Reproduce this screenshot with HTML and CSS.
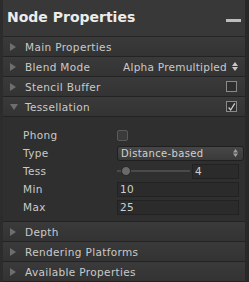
FILE: index.html
```html
<!DOCTYPE html>
<html>
<head>
<meta charset="utf-8">
<link rel="stylesheet" href="styles.css">
</head>
<body>
<div class="panel">
  <div class="title">
    <span class="title-text">Node Properties</span>
    <span class="minimize"></span>
  </div>
  <div class="row"><span class="tri"></span><span class="label">Main Properties</span></div>
  <div class="row"><span class="tri"></span><span class="label">Blend Mode</span><span class="value">Alpha Premultipled</span><span class="updown"><svg width="6" height="9" viewBox="0 0 6 9"><path d="M0 4 L3 0 L6 4 Z M0 5 L3 9 L6 5 Z" fill="#c8c8c8"/></svg></span></div>
  <div class="row"><span class="tri"></span><span class="label">Stencil Buffer</span><span class="check"></span></div>
  <div class="row"><span class="tri open"></span><span class="label">Tessellation</span><span class="check"><svg width="11" height="11" viewBox="0 0 11 11"><path d="M2 5.5 L4.5 8.5 L9.5 0.5" stroke="#d0d0d0" stroke-width="1.5" fill="none"/></svg></span></div>
  <div class="content">
    <div class="field"><span class="flabel">Phong</span><span class="check small"></span></div>
    <div class="field"><span class="flabel">Type</span><span class="dropdown"><span>Distance-based</span><svg width="5" height="8" viewBox="0 0 5 8"><path d="M0 3.5 L2.5 0 L5 3.5 Z M0 4.5 L2.5 8 L5 4.5 Z" fill="#a0a0a0"/></svg></span></div>
    <div class="field"><span class="flabel">Tess</span><span class="slider"><span class="track"></span><span class="thumb"></span></span><span class="num short">4</span></div>
    <div class="field"><span class="flabel">Min</span><span class="num">10</span></div>
    <div class="field"><span class="flabel">Max</span><span class="num">25</span></div>
  </div>
  <div class="row"><span class="tri"></span><span class="label">Depth</span></div>
  <div class="row"><span class="tri"></span><span class="label">Rendering Platforms</span></div>
  <div class="row"><span class="tri"></span><span class="label">Available Properties</span></div>
</div>
</body>
</html>
```
FILE: styles.css
```css
* { box-sizing: border-box; }
html, body { margin: 0; padding: 0; background: #2b2b2b; }
.panel {
  width: 249px;
  height: 282px;
  overflow: hidden;
  background: #353535;
  font-family: "DejaVu Sans", Verdana, sans-serif;
  font-size: 10.5px;
  letter-spacing: 0.35px;
  color: #cacaca;
  border-left: 3px solid #2c2c2c;
  border-right: 4px solid #282828;
}
.title {
  height: 37px;
  display: flex;
  align-items: center;
  justify-content: space-between;
  padding: 0 2px 0 4px;
  background: #383838;
  border-bottom: 1px solid #252525;
}
.title-text {
  font-weight: bold;
  font-size: 14px;
  letter-spacing: 0;
  color: #ececec;
  margin-top: -2px;
}
.minimize {
  width: 15px;
  height: 3px;
  background: #bdbdbd;
  margin-top: 4px;
  margin-right: 2px;
}
.row {
  height: 20px;
  display: flex;
  align-items: center;
  background: linear-gradient(#3a3a3a, #333333);
  border-bottom: 1px solid #232323;
  padding-left: 7px;
  padding-right: 4px;
}
.tri {
  width: 0; height: 0;
  border-top: 4px solid transparent;
  border-bottom: 4px solid transparent;
  border-left: 6px solid #6e6e6e;
  margin-right: 9px;
}
.tri.open {
  border-left: 4px solid transparent;
  border-right: 4px solid transparent;
  border-top: 6px solid #6e6e6e;
  border-bottom: 0;
  margin-right: 7px;
}
.label { flex: 1; white-space: nowrap; }
.value { margin-right: 5px; white-space: nowrap; letter-spacing: 0.25px; }
.updown { display: flex; margin-right: 3px; }
.check {
  width: 11px;
  height: 11px;
  border: 1px solid #8a8a8a;
  background: #2e2e2e;
  margin-right: 4px;
  display: flex;
}
.content {
  background: #2f2f2f;
  padding: 9px 0 6px 0;
  height: 105px;
  border-bottom: 1px solid #232323;
}
.field {
  height: 18px;
  display: flex;
  align-items: center;
  padding-left: 20px;
  padding-right: 1px;
}
.flabel { width: 94px; }
.check.small {
  border-color: #5a5a5a;
  background: #3b3b3b;
  border-radius: 2px;
}
.dropdown {
  flex: 1;
  height: 15px;
  display: flex;
  align-items: center;
  justify-content: space-between;
  padding: 0 5px 0 3px;
  border: 1px solid #1f1f1f;
  border-radius: 3px;
  background: linear-gradient(#474747, #3a3a3a);
  font-size: 10px;
  color: #d0d0d0;
}
.slider {
  position: relative;
  width: 73px;
  height: 14px;
  display: flex;
  align-items: center;
}
.track {
  width: 100%;
  height: 2px;
  background: #4a4a4a;
}
.thumb {
  position: absolute;
  left: 4px;
  top: 2px;
  width: 10px;
  height: 10px;
  border-radius: 50%;
  background: #6a6a6a;
  border: 1px solid #262626;
}
.num {
  flex: 1;
  height: 15px;
  margin-left: 0;
  background: #2b2b2b;
  border: 1px solid #222;
  padding-left: 2px;
  display: flex;
  align-items: center;
  color: #cfcfcf;
  margin-right: 5px;
}
.num.short { margin-left: 2px; }
```
